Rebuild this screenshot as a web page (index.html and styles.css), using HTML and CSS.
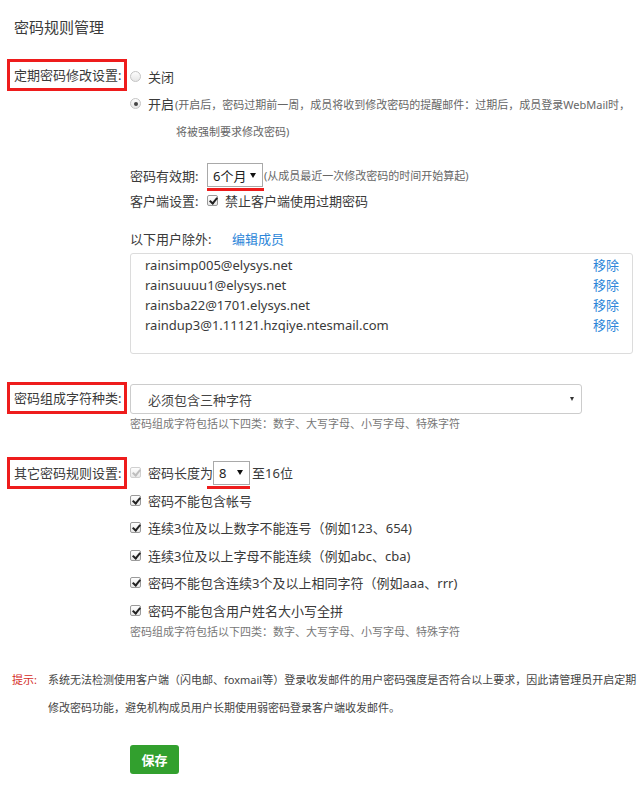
FILE: index.html
```html
<!DOCTYPE html>
<html lang="zh-CN">
<head>
    <meta charset="UTF-8">
    <title>密码规则管理</title>
    <link rel="stylesheet" href="styles.css">
</head>
<body>
    <div class="page">
        <h1 class="title">密码规则管理</h1>

        <!-- 定期修改 -->
        <div class="field">
            <div class="label mark">定期密码修改设置:</div>
            <div class="body body-expire">
                <div class="line">
                    <span class="radio"></span><span>关闭</span>
                </div>
                <div class="line">
                    <span class="radio on"></span><span>开启</span><span class="note">(开启后，密码过期前一周，成员将收到修改密码的提醒邮件：过期后，成员登录WebMail时，</span>
                </div>
                <div class="line note wrap">将被强制要求修改密码)</div>

                <div class="sub-row sub-first">
                    <span class="sub-label">密码有效期:</span>
                    <span class="hl">
                        <span class="select select-month">6个月<i class="arrow"></i></span>
                    </span>
                    <span class="note">(从成员最近一次修改密码的时间开始算起)</span>
                </div>
                <div class="sub-row sub-client">
                    <span class="sub-label">客户端设置:</span>
                    <span class="check"></span><span>禁止客户端使用过期密码</span>
                </div>
                <div class="sub-row sub-except">
                    <span class="sub-label wide">以下用户除外:</span>
                    <a class="link" href="#">编辑成员</a>
                </div>

                <ul class="members">
                    <li><span>rainsimp005@elysys.net</span><a class="link" href="#">移除</a></li>
                    <li><span>rainsuuuu1@elysys.net</span><a class="link" href="#">移除</a></li>
                    <li><span>rainsba22@1701.elysys.net</span><a class="link" href="#">移除</a></li>
                    <li><span>raindup3@1.11121.hzqiye.ntesmail.com</span><a class="link" href="#">移除</a></li>
                </ul>
            </div>
        </div>

        <!-- 字符种类 -->
        <div class="field field-kind">
            <div class="label mark">密码组成字符种类:</div>
            <div class="body">
                <div class="select select-wide">必须包含三种字符<i class="arrow small"></i></div>
                <div class="help">密码组成字符包括以下四类：数字、大写字母、小写字母、特殊字符</div>
            </div>
        </div>

        <!-- 其它规则 -->
        <div class="field field-other">
            <div class="label mark">其它密码规则设置:</div>
            <div class="body body-other">
                <div class="rule">
                    <span class="check disabled"></span><span>密码长度为</span>
                    <span class="hl hl-len">
                        <span class="select select-len">8<i class="arrow"></i></span>
                    </span>
                    <span>至16位</span>
                </div>
                <div class="rule"><span class="check"></span><span>密码不能包含帐号</span></div>
                <div class="rule"><span class="check"></span><span>连续3位及以上数字不能连号（例如123、654)</span></div>
                <div class="rule"><span class="check"></span><span>连续3位及以上字母不能连续（例如abc、cba)</span></div>
                <div class="rule"><span class="check"></span><span>密码不能包含连续3个及以上相同字符（例如aaa、rrr)</span></div>
                <div class="rule"><span class="check"></span><span>密码不能包含用户姓名大小写全拼</span></div>
                <div class="help">密码组成字符包括以下四类：数字、大写字母、小写字母、特殊字符</div>
            </div>
        </div>

        <div class="tip">
            <span class="tip-label">提示:</span>
            <p>系统无法检测使用客户端（闪电邮、foxmail等）登录收发邮件的用户密码强度是否符合以上要求，因此请管理员开启定期修改密码功能，避免机构成员用户长期使用弱密码登录客户端收发邮件。</p>
        </div>

        <button class="save" type="button">保存</button>
    </div>
</body>
</html>
```

FILE: styles.css
```css
body {
    margin: 0;
    font-family: "Noto Sans", "Noto Sans CJK SC", sans-serif;
    font-size: 13px;
    color: #3a3a3a;
    background: #fff;
}
.page {
    padding: 17px 0 40px 7px;
}
.title {
    margin: 0 0 22px 7px;
    font-size: 15px;
    font-weight: normal;
    line-height: 20px;
}
.field {
    display: flex;
    align-items: flex-start;
}
.label {
    box-sizing: border-box;
    width: 120px;
    height: 32px;
    padding-left: 4px;
    line-height: 26px;
    border: 3px solid transparent;
    white-space: nowrap;
}
.label.mark {
    border-color: #ee1c1c;
}
.body {
    margin-left: 3px;
    flex: 1;
}
.body-expire {
    padding-top: 4px;
}
.line {
    display: flex;
    align-items: center;
    height: 27px;
    white-space: nowrap;
}
.note {
    font-size: 11px;
    color: #666;
}
.line .note {
    margin-left: 1px;
}
.wrap {
    padding-left: 46px;
}
.radio {
    box-sizing: border-box;
    width: 11px;
    height: 11px;
    margin-right: 7px;
    border: 1px solid #c4c4c4;
    border-radius: 50%;
    background: linear-gradient(#fdfdfd, #e6e6e6);
    position: relative;
}
.radio.on::after {
    content: "";
    position: absolute;
    left: 2.5px;
    top: 2.5px;
    width: 4px;
    height: 4px;
    border-radius: 50%;
    background: #444;
}
.check {
    box-sizing: border-box;
    width: 11px;
    height: 11px;
    margin-right: 7px;
    border: 1px solid #9a9a9a;
    border-radius: 2px;
    background: linear-gradient(#fefefe, #e8e8e8);
    position: relative;
    flex: none;
}
.check::after {
    content: "";
    position: absolute;
    left: 2.5px;
    top: 0px;
    width: 3px;
    height: 6px;
    border-right: 2px solid #222;
    border-bottom: 2px solid #222;
    transform: rotate(40deg);
}
.check.disabled {
    border-color: #d0d0d0;
}
.check.disabled::after {
    border-color: #bdbdbd;
}
.sub-row {
    display: flex;
    align-items: center;
    white-space: nowrap;
}
.sub-first {
    margin-top: 19px;
    height: 24px;
}
.sub-client {
    height: 26px;
}
.sub-except {
    margin-top: 15px;
    height: 20px;
}
.sub-label {
    width: 77px;
}
.sub-label.wide {
    width: 102px;
}
.link {
    color: #2c86d9;
    text-decoration: none;
}
.hl {
    display: inline-flex;
    padding-bottom: 1px;
    border-bottom: 3px solid #ee1c1c;
    margin-bottom: -4px;
}
.select {
    box-sizing: border-box;
    display: flex;
    align-items: center;
    justify-content: space-between;
    height: 24px;
    border: 1px solid #a9a9a9;
    background: #fff;
    color: #222;
}
/* small solid triangle for the drop-downs */
.arrow {
    width: 0;
    height: 0;
    border-left: 3px solid transparent;
    border-right: 3px solid transparent;
    border-top: 5px solid #111;
}
.arrow.small {
    border-left-width: 2.5px;
    border-right-width: 2.5px;
    border-top-width: 4px;
    border-top-color: #333;
}
.select-month {
    width: 56px;
    padding: 0 6px 0 5px;
    margin-right: 1px;
}
.select-len {
    width: 37px;
    padding: 0 6px 0 5px;
    margin-right: 0;
}
.hl-len {
    padding-left: 6px;
    margin-left: -6px;
    margin-right: 2px;
}
.members {
    box-sizing: border-box;
    width: 503px;
    margin: 5px 0 0;
    padding: 1px 13px 18px 14px;
    list-style: none;
    border: 1px solid #dcdcdc;
    border-radius: 3px;
}
.members li {
    display: flex;
    justify-content: space-between;
    line-height: 20px;
}
.field-kind {
    margin-top: 28px;
}
.select-wide {
    width: 452px;
    height: 30px;
    margin-top: 2px;
    padding: 0 7px 0 17px;
    border-color: #ccc;
    border-radius: 3px;
    color: #444;
}
.help {
    font-size: 11px;
    line-height: 16px;
    color: #777;
    margin-top: 2px;
    white-space: nowrap;
}
.field-other {
    margin-top: 25px;
}
.body-other {
    padding-top: 2px;
}
.rule {
    display: flex;
    align-items: center;
    height: 27.5px;
    white-space: nowrap;
}
.body-other .help {
    margin-top: 0;
}
.tip {
    display: flex;
    margin: 26px 0 0 5px;
    font-size: 11px;
    line-height: 28px;
}
.tip-label {
    flex: none;
    width: 36px;
    color: #d42b1e;
}
.tip p {
    margin: 0;
    width: 590px;
    color: #444;
}
.save {
    margin: 23px 0 0 123px;
    width: 49px;
    height: 29px;
    padding: 0;
    border: none;
    border-radius: 3px;
    background-color: #32a02e;
    color: #fff;
    font-family: inherit;
    font-size: 13px;
    font-weight: bold;
    cursor: pointer;
}
```
